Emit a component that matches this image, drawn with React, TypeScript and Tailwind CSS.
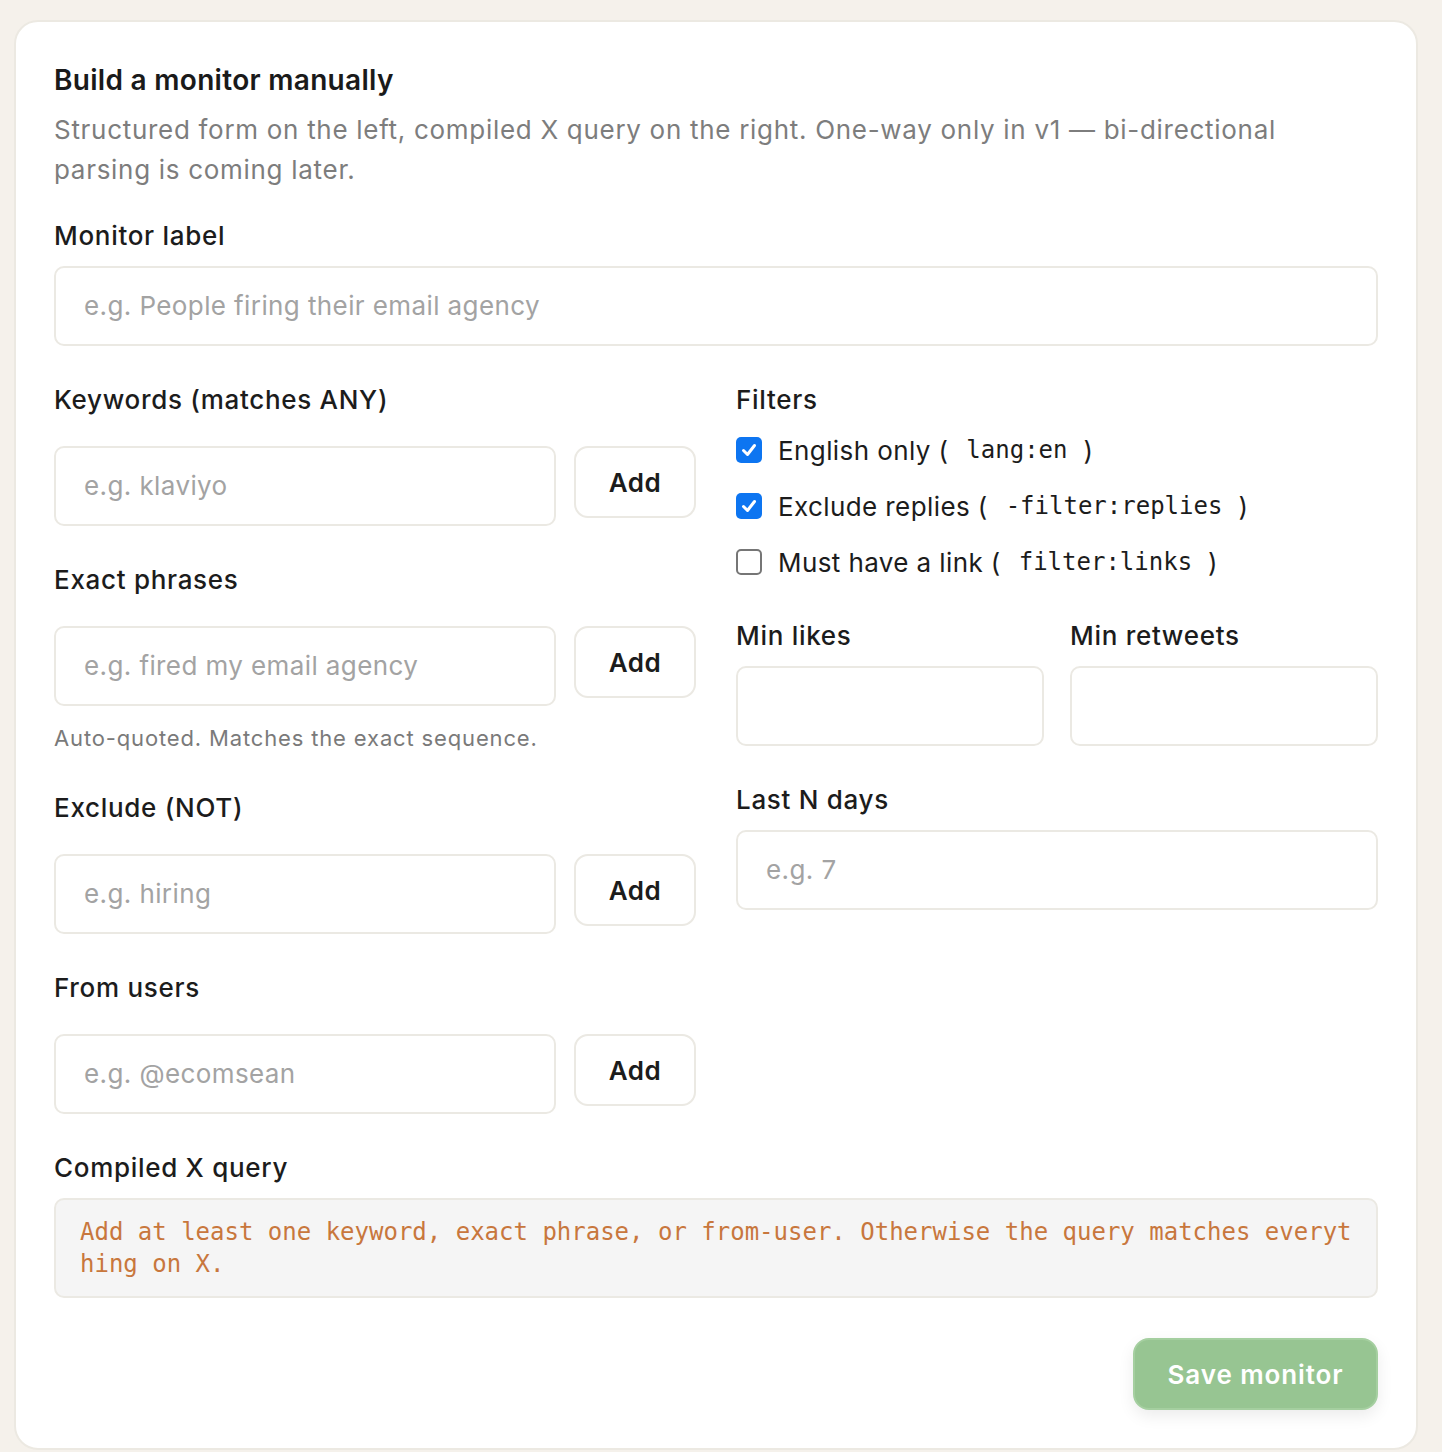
import React from "react";

const sans = { fontFamily: "Inter, 'Noto Sans', sans-serif" };
const mono = { fontFamily: "'DejaVu Sans Mono', 'Liberation Mono', monospace" };

function Label({ children }: { children: React.ReactNode }) {
  return <div className="text-[26px] leading-[36px] text-[#1c1c1c] font-medium tracking-[0.7px]">{children}</div>;
}

function TextInput({ placeholder }: { placeholder?: string }) {
  return (
    <input
      placeholder={placeholder}
      className="w-full h-[80px] rounded-[10px] border-2 border-[#ebe9e3] bg-white px-[28px] pb-[2px] text-[26px] tracking-[0.4px] text-[#1c1c1c] placeholder:text-[#a3a3a3] outline-none"
      style={sans}
    />
  );
}

function AddRow({ placeholder }: { placeholder: string }) {
  return (
    <div className="flex items-start gap-[18px] mt-[28px]">
      <div className="flex-1">
        <TextInput placeholder={placeholder} />
      </div>
      <button className="w-[122px] h-[72px] rounded-[14px] border-2 border-[#ebe9e3] bg-white text-[26px] font-semibold tracking-[0.5px] text-[#1c1c1c]">
        Add
      </button>
    </div>
  );
}

function Check({ checked }: { checked: boolean }) {
  if (checked) {
    return (
      <div className="w-[26px] h-[26px] rounded-[5px] bg-[#0d75f1] flex items-center justify-center shrink-0">
        <svg width="18" height="18" viewBox="0 0 18 18" fill="none">
          <path d="M3.5 9.5 L7.5 13.5 L14.5 4.5" stroke="white" strokeWidth="3" strokeLinecap="round" strokeLinejoin="round" />
        </svg>
      </div>
    );
  }
  return <div className="w-[26px] h-[26px] rounded-[5px] border-2 border-[#767676] bg-white shrink-0" />;
}

function FilterRow({ checked, label, code }: { checked: boolean; label: string; code: string }) {
  return (
    <div className="flex items-center h-[40px] gap-[16px]">
      <Check checked={checked} />
      <div className="text-[26px] text-[#1c1c1c] flex items-center whitespace-pre tracking-[0.4px]">
        <span>{label} (</span>
        <span className="text-[24px] pl-[18px] pr-[16px] tracking-normal text-[#1c1c1c]" style={mono}>{code}</span>
        <span>)</span>
      </div>
    </div>
  );
}

export default function App() {
  return (
    <div className="min-h-[1452px] bg-[#f5f1eb] pt-[20px] pl-[14px] pr-[24px]" style={sans}>
      <div className="bg-white rounded-[24px] border-2 border-[#ece9e2] px-[38px] pt-[38px] pb-[38px] w-[1404px]">
        <div className="text-[28px] leading-[40px] font-semibold text-[#1a1a1a] tracking-[0.3px]">Build a monitor manually</div>
        <div className="mt-[10px] text-[26px] leading-[40px] text-[#7d7d7d] tracking-[0.7px] pr-[40px]">
          Structured form on the left, compiled X query on the right. One-way only in v1 — bi-directional parsing is coming later.
        </div>

        <div className="mt-[28px]">
          <Label>Monitor label</Label>
          <div className="mt-[12px]">
            <TextInput placeholder="e.g. People firing their email agency" />
          </div>
        </div>

        <div className="mt-[36px] grid grid-cols-2 gap-x-[40px]">
          <div className="flex flex-col">
            <Label>Keywords (matches ANY)</Label>
            <AddRow placeholder="e.g. klaviyo" />

            <div className="mt-[36px]">
              <Label>Exact phrases</Label>
            </div>
            <AddRow placeholder="e.g. fired my email agency" />
            <div className="mt-[16px] text-[22px] leading-[32px] tracking-[0.85px] text-[#7a7a7a]">Auto-quoted. Matches the exact sequence.</div>

            <div className="mt-[36px]">
              <Label>Exclude (NOT)</Label>
            </div>
            <AddRow placeholder="e.g. hiring" />

            <div className="mt-[36px]">
              <Label>From users</Label>
            </div>
            <AddRow placeholder="e.g. @ecomsean" />
          </div>

          <div className="flex flex-col">
            <Label>Filters</Label>
            <div className="mt-[12px] flex flex-col gap-[16px]">
              <FilterRow checked label="English only" code="lang:en" />
              <FilterRow checked label="Exclude replies" code="-filter:replies" />
              <FilterRow checked={false} label="Must have a link" code="filter:links" />
            </div>

            <div className="mt-[36px] grid grid-cols-2 gap-x-[26px]">
              <div>
                <Label>Min likes</Label>
                <div className="mt-[12px]">
                  <TextInput />
                </div>
              </div>
              <div>
                <Label>Min retweets</Label>
                <div className="mt-[12px]">
                  <TextInput />
                </div>
              </div>
            </div>

            <div className="mt-[36px]">
              <Label>Last N days</Label>
              <div className="mt-[12px]">
                <TextInput placeholder="e.g. 7" />
              </div>
            </div>
          </div>
        </div>

        <div className="mt-[36px]">
          <Label>Compiled X query</Label>
          <div
            className="mt-[12px] h-[100px] rounded-[10px] border-2 border-[#ebe9e3] bg-[#f5f5f5] pl-[24px] pr-[20px] pt-[16px] text-[24px] leading-[32px] tracking-normal text-[#c8773d] break-all"
            style={mono}
          >
            Add at least one keyword, exact phrase, or from-user. Otherwise the query matches everything on X.
          </div>
        </div>

        <div className="mt-[40px] flex justify-end">
          <button className="w-[245px] h-[72px] rounded-[16px] bg-[#97c592] border-2 border-[#a5cfa0] text-white text-[26px] font-semibold tracking-[0.9px] shadow-[0_6px_16px_rgba(0,0,0,0.08)]">
            Save monitor
          </button>
        </div>
      </div>
    </div>
  );
}
